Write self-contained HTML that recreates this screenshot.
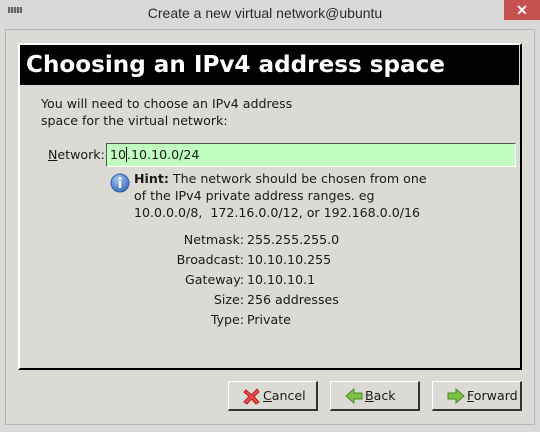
<!DOCTYPE html>
<html><head><meta charset="utf-8"><style>
*{margin:0;padding:0;box-sizing:border-box}
body{width:540px;height:432px;background:#d9d9d9;position:relative;overflow:hidden;font-family:"DejaVu Sans","Liberation Sans",sans-serif;font-size:12.6px;color:#1a1a1a}
.abs{position:absolute}
.title{left:0;top:5px;width:530px;text-align:center;font-family:"Liberation Sans",sans-serif;font-size:14px;color:#2b2b2b}
.close{left:504px;top:0;width:36px;height:20px;background:#c75050;color:#fff;text-align:center;font:bold 14px/20px "Liberation Sans",sans-serif}
.frame{left:5px;top:29px;width:530px;height:396px;background:#dcdad5;border:1px solid #b4b4b4}
.panel{left:18px;top:43px;width:504px;height:327px;border-top:2px solid #fff;border-left:2px solid #fff;border-right:2px solid #000;border-bottom:2px solid #000;background:#dcdad5}
.hdr{left:20px;top:45px;width:499px;height:40px;background:#000;color:#fff;font-weight:bold;font-size:23.1px;padding-left:6px;line-height:40px}
.entry{left:106px;top:143px;width:410px;height:24px;background:#c0ffc0;border-top:1px solid #555;border-left:1px solid #555;border-right:1px solid #fff;border-bottom:1px solid #fff;padding-left:3px;line-height:22px}
.lbl{width:120px;text-align:right;left:124px}
.val{left:247px}
.btn{top:381px;width:90px;height:30px;background:#dcdad5;border-top:1px solid #fff;border-left:1px solid #fff;border-right:2px solid #333;border-bottom:2px solid #333;line-height:27px}
.btn svg{position:absolute;left:14px;top:5px}
.btn span{position:absolute;left:34px}
u{text-decoration:underline}
</style></head><body>
<div class="abs" style="left:8px;top:7px;width:14px;height:6px;background:repeating-linear-gradient(90deg,#666 0 2px,#bbb 2px 3px)"></div>
<div class="abs title">Create a new virtual network@ubuntu</div>
<div class="abs close">✕</div>
<div class="abs frame"></div>
<div class="abs panel"></div>
<div class="abs hdr">Choosing an IPv4 address space</div>
<div class="abs" style="left:41px;top:95px;line-height:17px">You will need to choose an IPv4 address<br>space for the virtual network:</div>
<div class="abs" style="left:48px;top:147px"><u>N</u>etwork:</div>
<div class="abs entry">10<span style="border-left:1px solid #000"></span>.10.10.0/24</div>
<svg class="abs" style="left:110px;top:173px" width="20" height="20"><defs><radialGradient id="g" cx="40%" cy="30%" r="70%"><stop offset="0" stop-color="#a9c8f0"/><stop offset="1" stop-color="#3a6fc0"/></radialGradient></defs><circle cx="10" cy="10" r="9" fill="url(#g)" stroke="#2f5fa8"/><circle cx="10" cy="5.5" r="1.5" fill="#fff"/><rect x="8.8" y="8" width="2.4" height="7" fill="#fff"/></svg>
<div class="abs" style="left:134px;top:170px;line-height:17px"><b>Hint:</b> The network should be chosen from one<br>of the IPv4 private address ranges. eg<br>10.0.0.0/8,&nbsp; 172.16.0.0/12, or 192.168.0.0/16</div>
<div class="abs lbl" style="top:232px">Netmask:</div><div class="abs val" style="top:232px">255.255.255.0</div>
<div class="abs lbl" style="top:252px">Broadcast:</div><div class="abs val" style="top:252px">10.10.10.255</div>
<div class="abs lbl" style="top:272px">Gateway:</div><div class="abs val" style="top:272px">10.10.10.1</div>
<div class="abs lbl" style="top:292px">Size:</div><div class="abs val" style="top:292px">256 addresses</div>
<div class="abs lbl" style="top:312px">Type:</div><div class="abs val" style="top:312px">Private</div>
<div class="abs btn" style="left:228px"><svg width="17" height="18"><path d="M3 3 L8.5 8 L14 2 L16 5 L11 9.5 L16 15 L13 17 L8.5 12 L4 17 L1 15 L6 9.5 L1 5 Z" fill="#ef4a4a" stroke="#b52020"/></svg><span><u>C</u>ancel</span></div>
<div class="abs btn" style="left:330px"><svg width="18" height="18"><path d="M1 9 L9 2 L9 6 L17 6 L17 12 L9 12 L9 16 Z" fill="#7cc442" stroke="#4a8a22"/></svg><span><u>B</u>ack</span></div>
<div class="abs btn" style="left:432px"><svg width="18" height="18"><path d="M17 9 L9 2 L9 6 L1 6 L1 12 L9 12 L9 16 Z" fill="#7cc442" stroke="#4a8a22"/></svg><span><u>F</u>orward</span></div>
</body></html>
